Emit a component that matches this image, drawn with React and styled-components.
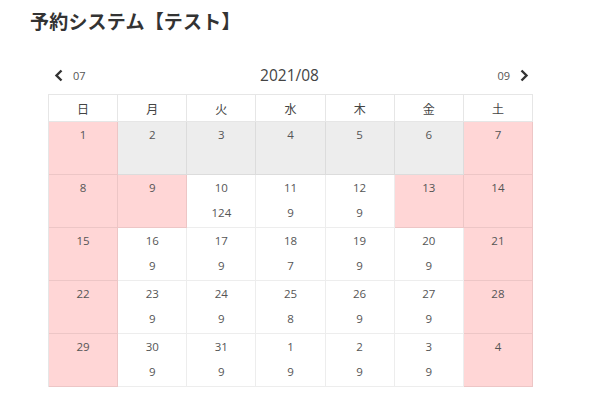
import React from 'react';
import styled, { createGlobalStyle } from 'styled-components';

const GlobalStyle = createGlobalStyle`
    body {
        margin: 0;
        background: #fff;
        font-family: "Open Sans", "Noto Sans CJK JP", sans-serif;
        color: #555;
    }
`;

const Page = styled.div`
    padding: 8px 0 0 30px;
`;

const Title = styled.h1`
    margin: 0;
    font-family: "Noto Sans CJK JP", sans-serif;
    font-size: 19px;
    font-weight: 700;
    line-height: 26px;
    color: #333;
    letter-spacing: 0.2px;
`;

const Calendar = styled.div`
    margin: 28px 0 0 18px;
    width: 485px;
`;

const Nav = styled.div`
    display: grid;
    grid-template-columns: 1fr auto 1fr;
    align-items: center;
    height: 26px;
    margin-bottom: 6px;
`;

const NavLink = styled.div`
    display: flex;
    align-items: center;
    gap: 9px;
    justify-self: ${(p) => (p.$right ? 'end' : 'start')};
    padding: ${(p) => (p.$right ? '0 4px 0 0' : '0 0 0 6px')};
    font-size: 11px;
    color: #555;
`;

const Month = styled.div`
    font-size: 15.5px;
    color: #444;
    padding-right: 2px;
`;

const Grid = styled.div`
    display: grid;
    grid-template-columns: repeat(7, 1fr);
    border-top: 1px solid #e6e6e6;
    border-left: 1px solid #e6e6e6;
`;

const HeadCell = styled.div`
    height: 26px;
    border-right: 1px solid #e6e6e6;
    border-bottom: 1px solid #e6e6e6;
    display: flex;
    align-items: center;
    justify-content: center;
    font-family: "Noto Sans CJK JP", sans-serif;
    font-size: 12px;
    color: #444;
`;

const bg = {
    holiday: '#ffd6d6',
    past: '#ededed',
    open: '#fff',
};

const DayCell = styled.div`
    height: 53px;
    box-sizing: border-box;
    padding-top: 5px;
    background: ${(p) => bg[p.$kind]};
    border-right: 1px solid rgba(0, 0, 0, 0.07);
    border-bottom: 1px solid rgba(0, 0, 0, 0.07);
    text-align: center;
    font-size: 11.5px;
    color: #555;
`;

const DayNum = styled.div`
    line-height: 16px;
`;

const Count = styled.div`
    line-height: 16px;
    margin-top: 9px;
`;

const Chevron = ({ dir }) => (
    <svg width="10" height="13" viewBox="0 0 10 13">
        <path
            d={dir === 'left' ? 'M7.5 1.5 L2.5 6.5 L7.5 11.5' : 'M2.5 1.5 L7.5 6.5 L2.5 11.5'}
            fill="none"
            stroke="#333"
            strokeWidth="2.4"
        />
    </svg>
);

const weekdays = ['日', '月', '火', '水', '木', '金', '土'];

// [day, kind, count]
const days = [
    [1, 'holiday'], [2, 'past'], [3, 'past'], [4, 'past'], [5, 'past'], [6, 'past'], [7, 'holiday'],
    [8, 'holiday'], [9, 'holiday'], [10, 'open', 124], [11, 'open', 9], [12, 'open', 9], [13, 'holiday'], [14, 'holiday'],
    [15, 'holiday'], [16, 'open', 9], [17, 'open', 9], [18, 'open', 7], [19, 'open', 9], [20, 'open', 9], [21, 'holiday'],
    [22, 'holiday'], [23, 'open', 9], [24, 'open', 9], [25, 'open', 8], [26, 'open', 9], [27, 'open', 9], [28, 'holiday'],
    [29, 'holiday'], [30, 'open', 9], [31, 'open', 9], [1, 'open', 9], [2, 'open', 9], [3, 'open', 9], [4, 'holiday'],
];

function App() {
    return (
        <>
            <GlobalStyle />
            <Page>
                <Title>予約システム【テスト】</Title>
                <Calendar>
                    <Nav>
                        <NavLink>
                            <Chevron dir="left" />
                            07
                        </NavLink>
                        <Month>2021/08</Month>
                        <NavLink $right>
                            09
                            <Chevron dir="right" />
                        </NavLink>
                    </Nav>
                    <Grid>
                        {weekdays.map((w) => (
                            <HeadCell key={w}>{w}</HeadCell>
                        ))}
                        {days.map(([d, kind, count], i) => (
                            <DayCell key={i} $kind={kind}>
                                <DayNum>{d}</DayNum>
                                {count !== undefined && <Count>{count}</Count>}
                            </DayCell>
                        ))}
                    </Grid>
                </Calendar>
            </Page>
        </>
    );
}

export default App;
